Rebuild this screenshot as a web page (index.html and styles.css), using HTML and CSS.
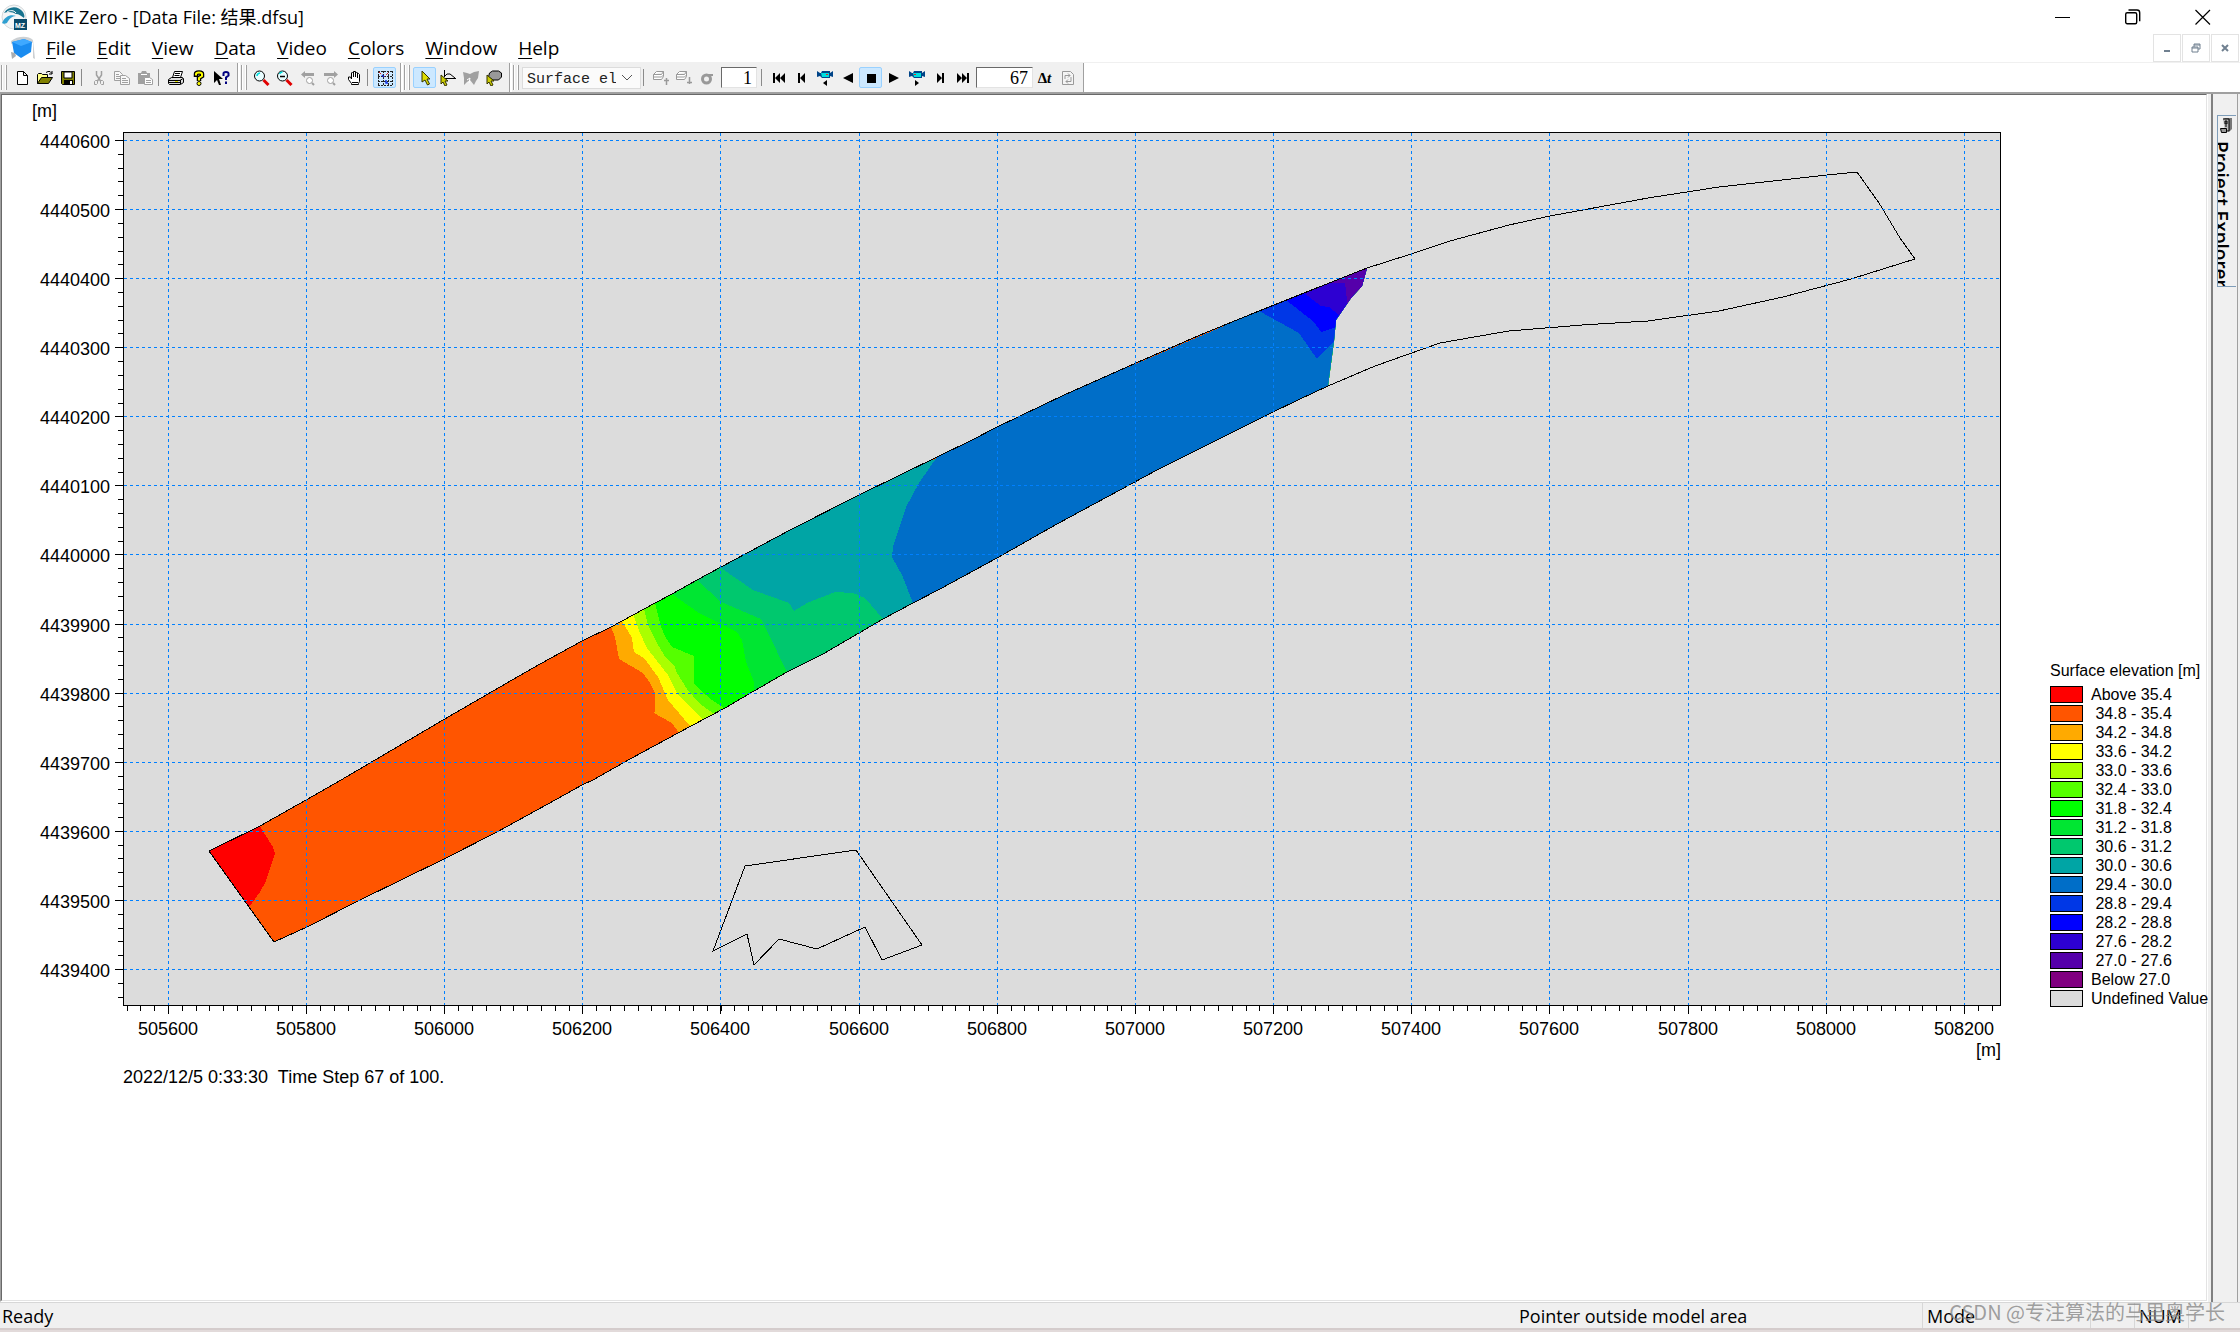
FILE: index.html
```html
<!DOCTYPE html>
<html lang="en">
<head>
<meta charset="utf-8">
<title>MIKE Zero - [Data File: 结果.dfsu]</title>
<link rel="stylesheet" href="styles.css">
</head>
<body>
<div class="app">

<header class="titlebar">
  <svg class="logo" viewBox="0 0 26 28" aria-hidden="true">
    <circle cx="13" cy="14" r="12" fill="#f4f6f7" stroke="#d5d9db"/>
    <path d="M3 10C7 3 17 2 22 9c1 2 2 4 1 6-3-2-5-4-8-4-3-2-8-3-12-1z" fill="#17738f"/>
    <path d="M1 20c3-7 9-9 14-7-4 0-7 3-9 7-2 1-4 1-5 0z" fill="#2f9fd0"/>
    <path d="M6 9c3-2 7-2 9 1" stroke="#fff" fill="none"/>
    <path d="M13 16h13v11H13z" fill="#0b4a6b"/>
    <text x="14" y="25" class="badge">MZ</text>
  </svg>
  <h1 class="title">MIKE Zero - [Data File: 结果.dfsu]</h1>
  <div class="caption-buttons">
    <button aria-label="Minimize"><svg viewBox="0 0 16 16"><path d="M0 8.5h15" stroke="#000" fill="none"/></svg></button>
    <button aria-label="Restore"><svg viewBox="0 0 16 16"><rect x=".7" y="3.7" width="11" height="11" rx="1.5" fill="none" stroke="#000" stroke-width="1.4"/><path d="M3.5 1h8.500q2.700 0 2.700 2.700v8.500" fill="none" stroke="#000" stroke-width="1.400"/></svg></button>
    <button aria-label="Close"><svg viewBox="0 0 16 16"><path d="M.5 1l14.500 14.500M15 1L.5 15.500" stroke="#000" stroke-width="1.200" fill="none"/></svg></button>
  </div>
</header>

<div class="menurow">
  <svg class="docicon" viewBox="0 0 26 24" aria-hidden="true">
    <path d="M1 5C7 0 18-1 23 4l2 19-2-1V7C17 2 8 4 1 8z" fill="#ccd0d3"/>
    <path d="M2 6l12-3 8 3-1 10-10 6-7-5z" fill="#1a8cf0"/>
    <path d="M2 6l12-3 8 3-11 4z" fill="#3fa9ff"/>
    <path d="M1 16l4 1 1 3-4 3z" fill="#a9adb0"/>
  </svg>
  <nav class="menu">
    <button><u>F</u>ile</button><button><u>E</u>dit</button><button><u>V</u>iew</button><button><u>D</u>ata</button><button><u>V</u>ideo</button><button><u>C</u>olors</button><button><u>W</u>indow</button><button><u>H</u>elp</button>
  </nav>
  <div class="mdi-buttons">
    <button aria-label="Minimize document"><svg viewBox="0 0 10 10"><path d="M2 7h6v2H2z" fill="#708090"/></svg></button>
    <button aria-label="Restore document"><svg viewBox="0 0 10 10"><path d="M3 4V1h6v5H7M1 4h6v5H1zM3 2h6M1 5h6" stroke="#708090" fill="none"/></svg></button>
    <button aria-label="Close document"><svg viewBox="0 0 10 10"><path d="M2 2l6 6M8 2L2 8" stroke="#708090" stroke-width="2" fill="none"/></svg></button>
  </div>
</div>

<div class="toolbars">
  <div class="band" role="toolbar" aria-label="Standard">
    <button class="tool" aria-label="New"><svg viewBox="0 0 16 16"><path d="M3.500 1.500h6l4 4v9h-10zM9.500 1.500v4h4" fill="#fff" stroke="#000"/></svg></button>
    <button class="tool" aria-label="Open"><svg viewBox="0 0 16 16"><path d="M0.500 13.500v-9l1-1h3l1 1h5v3" fill="#ff8" stroke="#000"/><path d="M.5 13.500l4-6h11l-4 6z" fill="#808000" stroke="#000"/><path d="M9 2.500l2-1h2l2 2M15 1v3h-3" fill="none" stroke="#000"/></svg></button>
    <button class="tool" aria-label="Save"><svg viewBox="0 0 16 16"><path d="M1.500 1.500h13v13h-12l-1-1z" fill="#808000" stroke="#000"/><path d="M4 2h8v6H4z" fill="#fff" stroke="#000"/><path d="M4 10h9v5H4z"/><path d="M10 11h2v3h-2z" fill="#fff"/></svg></button>
    <span class="sep"></span>
    <button class="tool" aria-label="Cut"><svg viewBox="0 0 16 16"><path d="M5.500 1v4l4 6M10.500 1v4l-4 6" fill="none" stroke="#a0a0a0" stroke-width="1.500"/><path d="M3.500 11.500l1-1h2v3l-1 1h-2zM9.500 10.500h2l1 1v3h-2l-1-1z" fill="none" stroke="#a0a0a0"/></svg></button>
    <button class="tool" aria-label="Copy"><svg viewBox="0 0 16 16"><path d="M.5 1.500h5l3 3v6h-8zM2 4.500h3M2 6.500h5M2 8.500h5" fill="#f8f8f8" stroke="#a0a0a0"/><path d="M6.500 5.500h5l4 3v6h-9zM8 8.500h4M8 10.500h6M8 12.500h6" fill="#f8f8f8" stroke="#a0a0a0"/></svg></button>
    <button class="tool" aria-label="Paste"><svg viewBox="0 0 16 16"><path d="M1 3h3l1-2h4l1 2h3v11H1z" fill="#a0a0a0"/><path d="M4 4.500h6" stroke="#fff"/><path d="M7.500 7.500h5l3 2v5h-8zM9 10.500h5M9 12.500h5" fill="#fff" stroke="#a0a0a0"/></svg></button>
    <span class="sep"></span>
    <button class="tool" aria-label="Print"><svg viewBox="0 0 16 16"><path d="M4.500 7.500l2-6h8l-2 6" fill="#fff" stroke="#000"/><path d="M7 3.500h5M6.500 5.500h5" stroke="#000"/><path d="M.5 9.500l3-2h11l1 1v4l-3 2h-11l-1-1z" fill="#ddd" stroke="#000"/><path d="M1 10.500h11l3-2M1 12.500h11M12.500 10v4" stroke="#000" fill="none"/><path d="M7 11.500h3" stroke="#dd0"/></svg></button>
    <button class="tool" aria-label="Help"><svg viewBox="0 0 16 16"><path d="M5 7V4q0-1.500 3-1.500t3 1.500v2L8 8v3" fill="none" stroke="#000" stroke-width="4.500"/><path d="M5 5.500V4q0-1.500 3-1.500t3 1.500v2L8 8v2.500" fill="none" stroke="#ff0" stroke-width="2"/><circle cx="8" cy="13.500" r="2" fill="#ff0" stroke="#000"/></svg></button>
    <button class="tool" aria-label="Context help"><svg viewBox="0 0 16 16"><path d="M0 1v12l3-3 2 5h2L5 9h4z"/><path d="M9.500 6V3.500q0-1.500 2.500-1.500t2.500 1.500v2l-2.500 2V10M12 11.500v2.500" fill="none" stroke="#000080" stroke-width="2"/></svg></button>
  </div>
  <div class="band" role="toolbar" aria-label="View">
    <button class="tool" aria-label="Zoom in"><svg viewBox="0 0 16 16"><circle cx="5.500" cy="6" r="5" fill="#e9fdff" stroke="#000"/><path d="M3 6q0-2.500 3-3" stroke="#0dd" stroke-width="1.500" fill="none"/><path d="M9.500 10l5 5" stroke="#e00000" stroke-width="3"/></svg></button>
    <button class="tool" aria-label="Zoom out"><svg viewBox="0 0 16 16"><circle cx="5.500" cy="6" r="5" fill="#e9fdff" stroke="#000"/><path d="M2.500 4q1-2 3-2" stroke="#0dd" stroke-width="1.500" fill="none"/><path d="M3 6.500h5" stroke="#000" stroke-width="1.500"/><path d="M9.500 10l5 5" stroke="#e00000" stroke-width="3"/></svg></button>
    <button class="tool" aria-label="Previous zoom"><svg viewBox="0 0 16 16"><path d="M1 4.500L5 1v2h9v3H5v2z" fill="#a0a0a0"/><circle cx="9.500" cy="10.500" r="3" fill="#fff" stroke="#a0a0a0"/><path d="M12 13l2 2" stroke="#a0a0a0" stroke-width="2"/></svg></button>
    <button class="tool" aria-label="Next zoom"><svg viewBox="0 0 16 16"><path d="M15 4.500L11 1v2H1v3h10v2z" fill="#a0a0a0"/><circle cx="7.500" cy="10.500" r="3" fill="#fff" stroke="#a0a0a0"/><path d="M10 13l2 2" stroke="#a0a0a0" stroke-width="2"/></svg></button>
    <button class="tool" aria-label="Pan"><svg viewBox="0 0 16 16"><path d="M5.500 14.500v-1l-3-4V7h2l1 2V3l1-1 1 1V1.500h2V3l1-1 1 1v1.500l1-1 1 1v7l-1 2v1zM7.500 3v4M9.500 3v4M11.500 4v4M6 12.500h6" fill="#fff" stroke="#000"/></svg></button>
    <span class="sep"></span>
    <button class="tool on" aria-label="Grid"><svg viewBox="0 0 16 16"><path d="M1.500 1v14M6.500 1v14M11.500 1v14M15.500 1v14M1 1.500h15M1 6.500h15M1 11.500h15M1 15.500h15" stroke="#222" stroke-dasharray="2 1"/><path d="M2 2l5 5 5-5" stroke="#e02020" stroke-dasharray="3 2" fill="none"/><path d="M5 5l2 2M9 10v3h2" stroke="#1030e0" stroke-width="1.500" fill="none"/></svg></button>
  </div>
  <div class="band" role="toolbar" aria-label="Select">
    <button class="tool on" aria-label="Pointer"><svg viewBox="0 0 16 16"><path d="M5 1v11l3-2 2.500 5 2-1L10 9h3z" fill="#dd0" stroke="#330"/></svg></button>
    <button class="tool" aria-label="Select profile"><svg viewBox="0 0 16 16"><path d="M4.500 0v7M1 8.500h15M4 7l3-3h3l5 4" stroke="#000" fill="none"/><path d="M1 5v9l2-2 2 4 2-1-2-4h3z" fill="#cc0" stroke="#330"/></svg></button>
    <button class="tool" aria-label="Select polygon"><svg viewBox="0 0 16 16"><path d="M0 2l4 1 3 1 4-2 5-1-1 7-2 3-2 4-4-5-3 2-3 3L1 8z" fill="#a0a0a0"/><path d="M4 10l3-2-1 5" stroke="#fff" fill="none"/></svg></button>
    <button class="tool" aria-label="Select area"><svg viewBox="0 0 16 16"><path d="M2.500 7l1-4 3-2h6l3 2v4l-3 3H7z" fill="#999" stroke="#000"/><path d="M1 5v9l2-2 2 4 2-1-2-4h3z" fill="#cc0" stroke="#330"/></svg></button>
  </div>
  <div class="band last" role="toolbar" aria-label="Time step">
    <label class="combo"><select aria-label="Item"><option>Surface el</option></select><svg viewBox="0 0 12 8" aria-hidden="true"><path d="M1 1l5 5 5-5" fill="none" stroke="#555"/></svg></label>
    <span class="sep"></span>
    <button class="tool" aria-label="Layer up"><svg viewBox="0 0 16 16"><path d="M.5 4.500l3-3h7l-2 3h-8zM.5 4.500v5h8l2-3v-5M.5 7h8l2-2" fill="#fff" stroke="#999"/><path d="M13.500 15V8M11 10.500h5" stroke="#999" stroke-width="1.500"/></svg></button>
    <button class="tool" aria-label="Layer down"><svg viewBox="0 0 16 16"><path d="M.5 4.500l3-3h7l-2 3h-8zM.5 4.500v5h8l2-3v-5M.5 7h8l2-2" fill="#fff" stroke="#999"/><path d="M13.500 7v7M11 12.500h5" stroke="#999" stroke-width="1.500"/></svg></button>
    <button class="tool" aria-label="Sigma layer"><svg viewBox="0 0 16 16"><circle cx="7.500" cy="9" r="4" fill="none" stroke="#999" stroke-width="3"/><path d="M8 4h6v2H8z" fill="#999"/></svg></button>
    <input class="num small" aria-label="Layer" value="1">
    <span class="sep"></span>
    <button class="tool" aria-label="First"><svg viewBox="0 0 16 16"><path d="M2 3h2v10H2zM9 3v10L4 8zM14 3v10L9 8z"/></svg></button>
    <button class="tool" aria-label="Step back"><svg viewBox="0 0 16 16"><path d="M4 3h2v10H4zM11 3v10L6 8z"/></svg></button>
    <button class="tool" aria-label="Record backward"><svg viewBox="0 0 16 16"><path d="M0 1l3 2h1l1-2h8v2l3-2v6l-3-1v2H5L3 6 0 7z" fill="#048"/><path d="M4 3h8v4H5z" fill="#0dd"/><path d="M9 4h2v1H9z" fill="#e22"/><path d="M6 13l4-3v6z"/></svg></button>
    <button class="tool" aria-label="Play backward"><svg viewBox="0 0 16 16"><path d="M13 3v10L3 8z"/></svg></button>
    <button class="tool on" aria-label="Stop"><svg viewBox="0 0 16 16"><path d="M4 4h9v9H4z"/></svg></button>
    <button class="tool" aria-label="Play"><svg viewBox="0 0 16 16"><path d="M3 3v10l10-5z"/></svg></button>
    <button class="tool" aria-label="Record forward"><svg viewBox="0 0 16 16"><path d="M0 1l3 2h1l1-2h8v2l3-2v6l-3-1v2H5L3 6 0 7z" fill="#048"/><path d="M4 3h8v4H5z" fill="#0dd"/><path d="M5 4h2v1H5z" fill="#e22"/><path d="M10 13l-4-3v6z"/></svg></button>
    <button class="tool" aria-label="Step forward"><svg viewBox="0 0 16 16"><path d="M10 3h2v10h-2zM5 3v10l5-5z"/></svg></button>
    <button class="tool" aria-label="Last"><svg viewBox="0 0 16 16"><path d="M12 3h2v10h-2zM7 3v10l5-5zM2 3v10l5-5z"/></svg></button>
    <input class="num" aria-label="Time step" value="67">
    <button class="tool delta" aria-label="Time step interval">Δ<i>t</i></button>
    <button class="tool" aria-label="Refresh"><svg viewBox="0 0 16 16"><path d="M2.500 1.500h8l3 3v10h-11z" fill="#f4f4f4" stroke="#999"/><path d="M5 9V5.500h5M8 3.500l2 2-2 2M11 7v4.500H6M8 9.500l-2 2 2 2" fill="none" stroke="#999"/></svg></button>
  </div>
</div>

<div class="body">
  <main class="view">
    <div class="sheet">
      <figure class="plot">
        <svg class="chart" viewBox="2 95 2048 970" role="img" aria-label="Surface elevation map">
          <defs>
            <clipPath id="wet"><path d="M209 851L260 826 306 800 341 780 443 720 519 676 540 664 582 641 611 627 655 603 672 594 697 580 721 567 790 530 859 495 937 457 972 440 997 427 1064 395 1136 363 1200 335 1259 311 1304 293 1367 268 1362 286 1351 298 1336 320 1334 341 1328 386 1298 400 1271 413 1157 470 1057 524 1020 545 997 558 940 589 913 603 883 619 823 654 787 672 754 691 725 708 691 726 630 759 593 780 582 785 557 799 497 832 444 859 360 900 307 927 274 942z"/></clipPath>
          </defs>
          <path class="area" d="M123.500 132.500h1877v873h-1877z"/>
          <g clip-path="url(#wet)" shape-rendering="crispEdges">
            <path fill="#ff5500" d="M200 250h1200v700H200z"/>
            <path fill="#ff0000" d="M255 815L260 826 266 836 273 847 275 854 273 860 265 883 260 892 250 906 240 915 200 850z"/>
            <path fill="#ffaa00" d="M607 615L611 627 615 637 619 659 643 673 650 683 655 693 655 711 654 713 672 723 679 733 685 745H1400V250z"/>
            <path fill="#ffff00" d="M617 610L622 621 632 638 634 652 644 658 658 677 668 700 690 726 697 735H1400V250z"/>
            <path fill="#aaff00" d="M630 605L633 614 640 633 647 648 668 675 678 695 702 719 712 730H1400V250z"/>
            <path fill="#55ff00" d="M642 600L644 609 648 625 657 643 664 655 675 667 677 673 687 689 700 704 713 713 725 724H1400V250z"/>
            <path fill="#00ff00" d="M653 595L655 603 661 627 666 638 672 647 694 656V683L700 690 712 700 724 708 735 716H1400V250z"/>
            <path fill="#00e632" d="M662 586L672 594 699 613 737 632 742 640 746 662 754 682V705H1400V250z"/>
            <path fill="#00c86e" d="M688 570L697 580 721 602 761 619 767 631 787 672 793 685H1400V250z"/>
            <path fill="#00a5a5" d="M710 560L721 568 753 590 789 603 794 611 807 603 835 592 853 593 865 598 883 619 892 630H1400V250z"/>
            <path fill="#006ec8" d="M943 447L937 457 919 483 906 507 893 547 892 557 902 575 913 603 918 615H1400V250z"/>
            <path fill="#0037e6" d="M1249 304L1259 311 1299 333 1317 359 1334 341 1400 320V250z"/>
            <path fill="#0000ff" d="M1279 292L1286 300 1314 322 1321 332 1336 327 1400 320V250z"/>
            <path fill="#2d00d2" d="M1296 285L1304 293 1321 306 1329 307 1339 315 1400 320V250z"/>
            <path fill="#5500aa" d="M1322 283H1345L1347 300 1346 310 1400 310V250z"/>
          </g>
          <path class="outline" d="M209 851L260 826 306 800 341 780 443 720 519 676 540 664 582 641 611 627 655 603 672 594 697 580 721 567 790 530 859 495 937 457 972 440 997 427 1064 395 1136 363 1200 335 1259 311 1304 293 1367 268 1386 262 1411 254 1450 241 1509 225 1550 216 1648 198 1719 187 1827 175 1857 172 1879 203 1900 238 1915 259 1851 279 1783 297 1719 311 1648 321 1582 325 1509 331 1474 337 1440 343 1375 366 1328 386 1298 400 1271 413 1157 470 1057 524 1020 545 997 558 940 589 913 603 883 619 823 654 787 672 754 691 725 708 691 726 630 759 593 780 582 785 557 799 497 832 444 859 360 900 307 927 274 942z"/>
          <path class="outline" d="M713 951L745 866 856 850 922 945 882 960 865 927 817 949 779 939 754 965 747 934z"/>
          <path class="grid" d="M168.500 133v872M306.500 133v872M444.500 133v872M582.500 133v872M720.500 133v872M859.500 133v872M997.500 133v872M1135.500 133v872M1273.500 133v872M1411.500 133v872M1549.500 133v872M1688.500 133v872M1826.500 133v872M1964.500 133v872"/>
          <path class="grid" d="M124 140.500h1876M124 209.500h1876M124 278.500h1876M124 347.500h1876M124 416.500h1876M124 485.500h1876M124 554.500h1876M124 624.500h1876M124 693.500h1876M124 762.500h1876M124 831.500h1876M124 900.500h1876M124 969.500h1876"/>
          <path class="frame" d="M123.500 132.500h1877v873h-1877z"/>
          <path class="frame" d="M115 140.500h8M115 209.500h8M115 278.500h8M115 347.500h8M115 416.500h8M115 485.500h8M115 554.500h8M115 624.500h8M115 693.500h8M115 762.500h8M115 831.500h8M115 900.500h8M115 969.500h8"/>
          <path class="frame" d="M168.500 1006v8M306.500 1006v8M444.500 1006v8M582.500 1006v8M720.500 1006v8M859.500 1006v8M997.500 1006v8M1135.500 1006v8M1273.500 1006v8M1411.500 1006v8M1549.500 1006v8M1688.500 1006v8M1826.500 1006v8M1964.500 1006v8"/>
          <path class="minor-y" d="M120.500 140V1005"/>
          <path class="minor-x" d="M126.500 1008.500H2000"/>
          <g class="ylabels">
            <text x="57" y="117">[m]</text>
            <text x="110" y="148">4440600</text><text x="110" y="217">4440500</text><text x="110" y="286">4440400</text><text x="110" y="355">4440300</text><text x="110" y="424">4440200</text><text x="110" y="493">4440100</text><text x="110" y="562">4440000</text><text x="110" y="632">4439900</text><text x="110" y="701">4439800</text><text x="110" y="770">4439700</text><text x="110" y="839">4439600</text><text x="110" y="908">4439500</text><text x="110" y="977">4439400</text>
            <text x="2001" y="1056">[m]</text>
          </g>
          <g class="xlabels">
            <text x="168" y="1035">505600</text><text x="306" y="1035">505800</text><text x="444" y="1035">506000</text><text x="582" y="1035">506200</text><text x="720" y="1035">506400</text><text x="859" y="1035">506600</text><text x="997" y="1035">506800</text><text x="1135" y="1035">507000</text><text x="1273" y="1035">507200</text><text x="1411" y="1035">507400</text><text x="1549" y="1035">507600</text><text x="1688" y="1035">507800</text><text x="1826" y="1035">508000</text><text x="1964" y="1035">508200</text>
          </g>
        </svg>
        <figcaption class="stamp">2022/12/5 0:33:30  Time Step 67 of 100.</figcaption>
      </figure>
      <section class="legend">
        <h2>Surface elevation [m]</h2>
        <ul>
          <li><span class="sw c1"></span>Above 35.4</li>
          <li><span class="sw c2"></span> 34.8 - 35.4</li>
          <li><span class="sw c3"></span> 34.2 - 34.8</li>
          <li><span class="sw c4"></span> 33.6 - 34.2</li>
          <li><span class="sw c5"></span> 33.0 - 33.6</li>
          <li><span class="sw c6"></span> 32.4 - 33.0</li>
          <li><span class="sw c7"></span> 31.8 - 32.4</li>
          <li><span class="sw c8"></span> 31.2 - 31.8</li>
          <li><span class="sw c9"></span> 30.6 - 31.2</li>
          <li><span class="sw c10"></span> 30.0 - 30.6</li>
          <li><span class="sw c11"></span> 29.4 - 30.0</li>
          <li><span class="sw c12"></span> 28.8 - 29.4</li>
          <li><span class="sw c13"></span> 28.2 - 28.8</li>
          <li><span class="sw c14"></span> 27.6 - 28.2</li>
          <li><span class="sw c15"></span> 27.0 - 27.6</li>
          <li><span class="sw c16"></span>Below 27.0</li>
          <li><span class="sw c17"></span>Undefined Value</li>
        </ul>
      </section>
    </div>
  </main>
  <aside class="dock">
    <button class="dock-tab">
      <svg viewBox="0 0 14 16" aria-hidden="true"><path d="M3 1l2-1h7v11l-3 3z" fill="#777"/><path d="M3 1h6v12H5M5 3v3h2V3zM5 8h2" fill="#bbb" stroke="#000"/><path d="M.5 10.500h6v4h-5z" fill="#999" stroke="#000"/></svg>
      <span>Project Explorer</span>
    </button>
  </aside>
</div>

<footer class="status">
  <span class="pane ready">Ready</span>
  <span class="pane pointer">Pointer outside model area</span>
  <span class="pane mode">Mode</span>
  <span class="pane blank"></span>
  <span class="pane keys">NUM</span>
  <span class="pane end"></span>
  <span class="watermark">CSDN @专注算法的马里奥学长</span>
</footer>
<div class="edge"></div>
</div>
</body>
</html>
```
FILE: styles.css
```css
*, *::before { box-sizing: border-box; }

body {
  margin: 0;
  background: #fff;
  color: #000;
  font: 18px/24px "Open Sans", "Noto Sans CJK SC", sans-serif;
}

button {
  margin: 0;
  padding: 0;
  border: 0;
  background: none;
  color: inherit;
  font: inherit;
}

svg { display: block; }

.app {
  display: flex;
  flex-direction: column;
  min-height: 100vh;
}

/* Title bar and menu */
.titlebar {
  display: flex;
  align-items: center;
  height: 34px;
  padding: 0 2px 0 1px;
}

.logo { width: 26px; height: 28px; }
.badge { font: bold 7px "Liberation Sans", sans-serif; fill: #fff; }

.title {
  margin: 0 0 0 5px;
  font-size: 18px;
  font-weight: 400;
  white-space: nowrap;
}

.caption-buttons { display: flex; margin-left: auto; }

.caption-buttons button {
  display: grid;
  place-items: center;
  width: 70px;
  height: 34px;
}

.caption-buttons svg { width: 16px; height: 16px; }

.menurow {
  display: flex;
  align-items: center;
  height: 28px;
  padding: 0 1px 0 10px;
}

.docicon { width: 26px; height: 24px; }

.menu {
  display: flex;
  gap: 21px;
  margin-left: 10px;
  font-size: 19px;
}

.menu u { text-decoration-thickness: 1px; text-underline-offset: 3px; }

.mdi-buttons {
  display: flex;
  gap: 1px;
  margin-left: auto;
}

.mdi-buttons button {
  display: grid;
  place-items: center;
  width: 28px;
  height: 28px;
  border: 1px solid #e3e3e3;
}

.mdi-buttons svg { width: 10px; height: 10px; }

/* Toolbars */
.toolbars {
  display: flex;
  height: 30px;
  border-top: 1px solid #f0f0f0;
}

.band {
  display: flex;
  align-items: center;
  padding-right: 5px;
  background: #f0f0f0;
  border-right: 2px solid #fff;
  box-shadow: inset -1px 0 #a0a0a0;
}

.band.last { border-right: 0; }

.band::before {
  content: "";
  width: 6px;
  height: 25px;
  margin: 0 3px 0 1px;
  border: 1px solid #a0a0a0;
  border-width: 0 1px;
  box-shadow: inset 1px 0 #fff, inset -1px 0 #fff;
}

.tool {
  display: grid;
  place-items: center;
  width: 23px;
  height: 21px;
}

.tool svg { width: 16px; height: 16px; }

.tool.on {
  background: #cce8ff;
  border: 1px solid #99d1ff;
  border-radius: 2px;
}

.sep {
  width: 6px;
  height: 17px;
  margin-left: 2px;
  border-left: 1px solid #8a8a8a;
}

.combo { display: grid; align-items: center; }
.combo > * { grid-area: 1 / 1; }

.combo select {
  appearance: none;
  width: 119px;
  height: 22px;
  padding: 2px 24px 0 4px;
  border: 1px solid #dcdcdc;
  border-radius: 0;
  background: #fbfbfb;
  color: #222;
  font: 15px/20px "Liberation Mono", monospace;
}

.combo svg {
  width: 12px;
  height: 8px;
  margin-right: 8px;
  justify-self: end;
  pointer-events: none;
}

.num {
  width: 57px;
  height: 21px;
  margin: 0 0 0 2px;
  padding: 2px 4px 0;
  border: 1px solid #e3e3e3;
  border-top-color: #696969;
  border-left-color: #696969;
  background: #fff;
  font: 18px/18px "Liberation Serif", serif;
  text-align: right;
}

.num.small { width: 36px; margin: 0 2px 0 3px; }

.delta {
  display: flex;
  justify-content: center;
  align-items: center;
  font: bold 15px/20px "Liberation Serif", serif;
}

/* Document window */
.body {
  display: flex;
  flex: 1;
  border-top: 2px solid #a0a0a0;
  background: #f0f0f0;
}

.view {
  flex: 1;
  min-width: 0;
  margin-right: 3px;
  border: 1px solid #fff;
  border-width: 0 1px 1px 0;
  border-left: 1px solid #a0a0a0;
}

.sheet {
  display: flex;
  height: 100%;
  border: 1px solid #696969;
  border-right-color: #e3e3e3;
  border-bottom-color: #e3e3e3;
  background: #fff;
}

.plot { flex: 1; min-width: 0; margin: 0; }
.chart { width: 100%; height: auto; }

.chart text { font: 18px "Liberation Sans", Arial, sans-serif; }
.ylabels { text-anchor: end; }
.xlabels { text-anchor: middle; }
.area { fill: #dcdcdc; }
.outline, .frame { fill: none; stroke: #000; shape-rendering: crispEdges; }
.grid { stroke: #0080ff; stroke-dasharray: 3 3; shape-rendering: crispEdges; }
.minor-y { stroke: #000; stroke-width: 5; stroke-dasharray: 1 12.816; shape-rendering: crispEdges; }
.minor-x { stroke: #000; stroke-width: 5; stroke-dasharray: 1 12.815; shape-rendering: crispEdges; }

.stamp {
  padding-left: 121px;
  font: 18px/24px "Liberation Sans", Arial, sans-serif;
  white-space: pre;
}

.legend {
  width: 156px;
  margin-top: 565px;
  font: 16px/19px "Liberation Sans", Arial, sans-serif;
  white-space: nowrap;
}

.legend h2 { margin: 0 0 4px; font: inherit; line-height: 21px; }
.legend ul { margin: 0; padding: 0; list-style: none; }

.legend li {
  display: flex;
  align-items: center;
  gap: 8px;
  height: 19px;
  white-space: pre;
}

.sw {
  flex: none;
  width: 33px;
  height: 17px;
  border: 1px solid #000;
}

.c1 { background: #ff0000; }
.c2 { background: #ff5500; }
.c3 { background: #ffaa00; }
.c4 { background: #ffff00; }
.c5 { background: #aaff00; }
.c6 { background: #55ff00; }
.c7 { background: #00ff00; }
.c8 { background: #00e632; }
.c9 { background: #00c86e; }
.c10 { background: #00a5a5; }
.c11 { background: #006ec8; }
.c12 { background: #0037e6; }
.c13 { background: #0000ff; }
.c14 { background: #2d00d2; }
.c15 { background: #5500aa; }
.c16 { background: #800080; }
.c17 { background: #dcdcdc; }

/* Collapsed side panel */
.dock {
  width: 27px;
  margin-right: 2px;
  padding: 21px 1px 0 4px;
  border-left: 2px solid #808080;
  border-right: 1px solid #a0a0a0;
}

.dock-tab {
  display: flex;
  flex-direction: column;
  align-items: flex-start;
  gap: 7px;
  width: 19px;
  height: 172px;
  border: 1px solid #7f9db9;
  border-right: 0;
  overflow: hidden;
}

.dock-tab svg { flex: none; width: 14px; height: 16px; margin: 2px 0 0 2px; }

.dock-tab span {
  width: 20px;
  margin-left: -7px;
  writing-mode: vertical-rl;
  white-space: nowrap;
  font-weight: 600;
  font-size: 19px;
  line-height: 20px;
}

/* Status bar */
.status {
  position: relative;
  display: flex;
  height: 26px;
  border-top: 1px solid #d7d7d7;
  background: #f0f0f0;
  line-height: 26px;
  white-space: nowrap;
}

.pane { padding-left: 4px; border-left: 1px solid #d7d7d7; }
.ready { flex: 1; padding-left: 2px; border: 0; }
.pointer { width: 403px; padding-left: 0; border: 0; }
.mode { width: 168px; }
.blank { width: 44px; }
.keys { width: 54px; }
.end { width: 52px; }

.watermark {
  position: absolute;
  right: 15px;
  bottom: 4px;
  color: #888c;
  font: 20px/24px "Noto Sans CJK SC", sans-serif;
}

.edge {
  height: 4px;
  border-top: 2px solid #d4cccc;
  background: #e2dada;
}
```
